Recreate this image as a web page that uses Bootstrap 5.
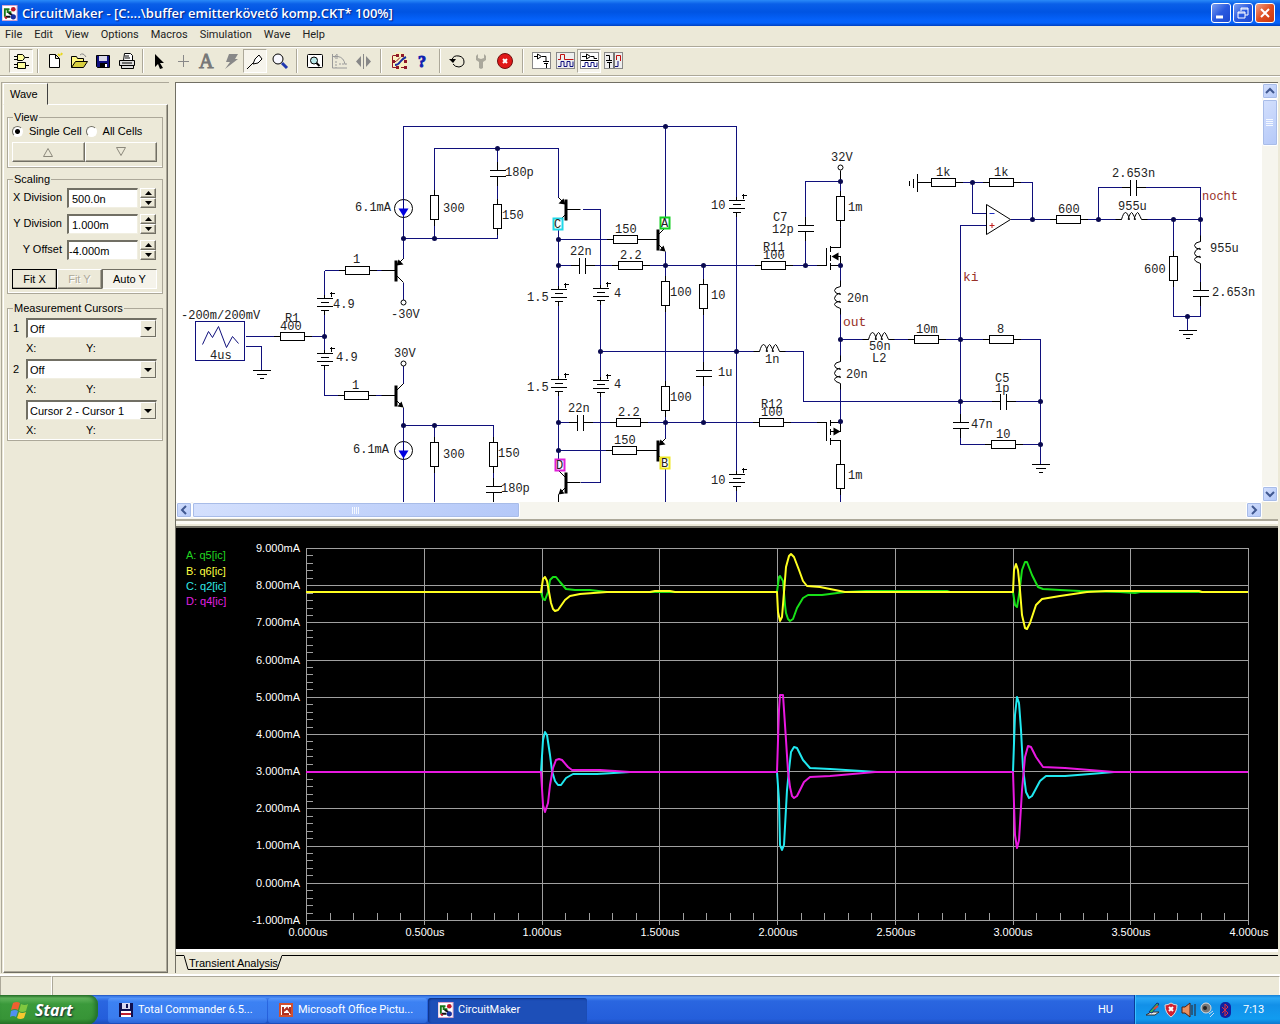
<!DOCTYPE html>
<html lang="en">
<head>
<meta charset="utf-8">
<meta name="viewport" content="width=device-width, initial-scale=1">
<title>CircuitMaker</title>
<link href="https://cdn.jsdelivr.net/npm/bootstrap@5.3.0/dist/css/bootstrap.min.css" rel="stylesheet">
<style>
:root{--face:#ece9d8;--shade:#aca899;--dark:#716f64}
body{background:var(--face);font:11px/14px Roboto,sans-serif;color:#000;overflow-x:hidden}
button,input,select{font:inherit;color:inherit;border-radius:0}
svg{display:block;flex:none}
.titlebar{height:26px;padding:0 5px 0 2px;background:linear-gradient(#2a8af8 0,#0a5fe8 4px,#0054e3 12px,#0562fb 20px,#0462fa 23px,#0040c0 26px)}
.titlebar h1{font:600 13px/26px "Open Sans",sans-serif;color:#fff;margin:0;text-shadow:1px 1px 1px #0a1f80}
.winbtn{width:20px;height:20px;padding:0;border:1px solid #fff;border-radius:3px;background:linear-gradient(135deg,#7d9ff0,#2a5ae0 50%,#1c48d0)}
.winbtn.shut{background:linear-gradient(135deg,#f0a088,#e04d20 50%,#c83810)}
.menubar{height:20px;padding:0 5px;gap:12px}
.menubar a{font:11px/18px Roboto,sans-serif;color:#222;text-decoration:none}
.toolbar{height:30px;padding:2px 9px 0;border-top:1px solid var(--shade);border-bottom:1px solid var(--shade);box-shadow:inset 0 1px #fff,0 1px #fff}
.tool{width:24px;height:24px;padding:2px;border:0;background:none}
.tool.down{padding:1px;border:1px solid;border-color:var(--shade) #fff #fff var(--shade);background:#f6f4ec}
.tsep{width:2px;height:24px;margin:0 4px;border-left:1px solid var(--shade);border-right:1px solid #fff}
.tsep.slim{margin:0 3px}.tsep.wide{margin:0 5px}
.workarea{padding:6px 2px 0 1px}
.side{width:168px;font:11px/12px "Liberation Sans",sans-serif;border-left:1px solid var(--shade);border-top:1px solid var(--shade)}
.sidetab{width:45px;height:22px;padding:4px 0 0 6px;border:1px solid;border-color:#fff #404040 transparent #fff;background:var(--face);margin-left:1px;position:relative;z-index:1}
.sidepage{border:1px solid;border-color:#fff #716f64 #716f64 #fff;box-shadow:inset -1px -1px var(--shade);padding:6px 4px 0 3px;margin:-1px 1px 0}
fieldset{border:1px solid var(--shade);box-shadow:inset 1px -1px #fff;padding:0 5px 5px 4px}
legend{float:none;width:auto;font:11px/12px "Liberation Sans",sans-serif;margin:0 0 0 1px;padding:0 1px}
.radios label{line-height:16px;display:flex;align-items:center;gap:6px}
.radios input{appearance:none;width:11px;height:11px;margin:0;border-radius:50%;background:#fff;border:1px solid;border-color:#716f64 #fff #fff #716f64}
.radios input:checked{background:radial-gradient(#000 2px,#fff 3px)}
.pushbtn{height:20px;padding:0;border:1px solid;border-color:#fff #716f64 #716f64 #fff;background:var(--face);box-shadow:inset -1px -1px var(--shade)}
.pushbtn.default{border-color:#000}
.pushbtn.in{border-color:#716f64 #fff #fff #716f64;background:#f5f3ea;box-shadow:none}
.pushbtn:disabled{color:var(--shade);text-shadow:1px 1px #fff}
.sunk{height:20px;min-width:0;background:#fff;border:2px solid;border-color:var(--dark) #f1efe2 #f1efe2 var(--dark);border-width:2px 1px 1px 2px;border-radius:0;appearance:none;padding:0 3px}
.valrow label{width:50px;text-align:right;line-height:18px}
.valrow input{width:71px;margin-left:5px}
.spin{width:16px;margin-left:2px}
.spin button{height:10px;padding:0}
.cursel select{width:100%;padding:0 2px}
.dropmark{position:absolute;right:1px;top:2px;width:16px;height:17px;pointer-events:none;background:var(--face);border:1px solid;border-color:#fff #716f64 #716f64 #fff}
.xy{padding-left:14px}
.xy span{width:60px;line-height:20px}
.views{border-left:1px solid var(--dark);border-top:1px solid var(--dark);margin-left:6px;min-width:0}
.sheet{background:#fff;min-width:0}
.sheet text{font:12px "Liberation Mono",monospace;fill:#222}
.sheet .net{fill:#983028}
.sheet .big{font-size:13px}
.sbar{background:#f6f5ee}
.vbar{width:16px}.hbar{height:17px}
.sbtn,.thumb{background:linear-gradient(135deg,#d4e0fd,#b4c8f8);border:1px solid #fff;border-radius:2px;padding:0;box-shadow:0 0 0 1px #a8bce8 inset}
.sbtn{width:16px;height:16px;flex:none}
.splitter{height:9px;border-top:2px solid var(--shade);box-shadow:inset 0 3px #fbfaf4;border-bottom:2px solid var(--dark)}
.plot{background:#000}
.plot text{font:11px "Liberation Sans",sans-serif;fill:#fff}
.ptabs{height:24px;border-top:3px solid #fff;position:relative}
.ptabs .edge{flex:1;height:1px;margin-top:3px;background:#000}
.ptabs a{font:11px/14px "Liberation Sans",sans-serif;color:#000;text-decoration:none;width:98px;height:20px;position:relative;padding:4px 0 0 5px;margin-left:8px;white-space:nowrap}
.ptabs a svg{position:absolute;left:0;top:3px}
.lead-edge{position:absolute;left:0;top:3px;width:8px;height:1px;background:#000}
.status{height:21px;border-top:2px solid #fff;margin-top:1px}
.status div{border-top:1px solid var(--shade);border-right:1px solid #fff;border-left:1px solid var(--shade)}
.taskbar{height:30px;background:linear-gradient(#1c50c0 0,#4a8cf4 2px,#2a66e0 6px,#245edb 24px,#1a48b0);font:11px/14px Roboto,sans-serif;color:#fff}
.startbtn{width:98px;border:0;padding:0 0 0 10px;color:#fff;border-radius:0 9px 12px 0;background:linear-gradient(#2a7028 0,#62b45c 3px,#3b9a3b 9px,#379437 24px,#236b23);box-shadow:inset -3px 0 4px #22702a;gap:5px}
.startbtn span{font:italic bold 16px/26px "Open Sans",sans-serif;text-shadow:1px 1px 2px #123}
.taskbtn{width:159px;height:25px;padding:0 10px;border:0;border-radius:3px;color:#fff;background:linear-gradient(#5a98fa,#3c81f3 4px,#3a7cee 20px,#2c66d8);gap:4px}
.taskbtn.cur{background:#1d4fb8;box-shadow:inset 1px 1px 2px #0c2f80}
.tray{width:146px;padding-left:10px;border-left:1px solid #0a3a98;background:linear-gradient(#1480d8 0,#2aa8f6 3px,#1290e8 10px,#119cf0 24px,#0c70c8);box-shadow:inset 1px 0 #3cc0ff;gap:2px}
.tray span{margin-left:8px}
</style>
<script src="https://cdn.jsdelivr.net/npm/bootstrap@5.3.0/dist/js/bootstrap.bundle.min.js"></script>
</head>
<body class="d-flex flex-column min-vh-100">

<svg width="0" height="0" class="position-absolute" aria-hidden="true">
  <defs>
    <g id="appicon"><rect width="16" height="16" fill="#fff" stroke="#d8a0c8"/><path d="M2 4h6M3 4v8M6 4v3h4" stroke="#187818" stroke-width="2" fill="none"/><circle cx="12" cy="4" r="2.5" fill="#c01828"/><path d="M7 8l4 2M4 12h5" stroke="#111" stroke-width="2"/><circle cx="12" cy="12" r="2.8" fill="#1830a0"/><path d="M3 12l2 2" stroke="#c01828" stroke-width="2"/></g>
    <g id="rh"><path d="M-19 0h38" stroke="#000"/><rect x="-12" y="-4" width="24" height="8" fill="#fff" stroke="#000"/></g>
    <g id="rv"><path d="M0 -18v36" stroke="#000"/><rect x="-4" y="-12" width="8" height="24" fill="#fff" stroke="#000"/></g>
    <g id="cv"><path d="M0 -12v24" stroke="#000"/><rect x="-8" y="-3" width="16" height="6" fill="#fff" stroke="none"/><path d="M-8 -3h16M-8 3h16" stroke="#000"/></g>
    <g id="ch"><path d="M-12 0h24" stroke="#000"/><rect x="-3" y="-8" width="6" height="16" fill="#fff" stroke="none"/><path d="M-3 -8v16M3 -8v16" stroke="#000"/></g>
    <g id="bat"><path d="M0 -4v20" stroke="#000"/><rect x="-8" y="0" width="16" height="12" fill="#fff" stroke="none"/><path d="M-8 0h16M-4 4h8M-8 8h16M-4 12h8M5 -5h5M7 -7v5" stroke="#000"/></g>
    <g id="lh"><rect x="-12" y="-2" width="24" height="4" fill="#fff" stroke="none"/><path d="M-18 0h6q2-7 4-7t4 7q-2 1-1-2 2-5 3-5t4 7q-2 1-1-2 2-5 3-5t4 7h6" fill="none" stroke="#000"/></g>
    <g id="lv"><rect x="-2" y="-12" width="4" height="24" fill="#fff" stroke="none"/><path d="M0 -18v6q-6 1-6 4t6 4q0-2-2-1-4 2-4 5t6 4q0-2-2-1-4 1-4 3t6 4v6" fill="none" stroke="#000"/></g>
    <g id="gnd"><path d="M-9 0h18M-5 4h10M-2 8h4" stroke="#000"/></g>
    <circle id="dot" r="2.5" fill="#0a0a50"/>
    <g id="isrc"><circle r="9" fill="#fff" stroke="#000"/><path d="M0 -9v18" stroke="#000080"/><path d="M-5 0h10l-5 8z" fill="#0000e0"/></g>
    <g id="npn"><rect x="-1" y="-10" width="3" height="21" fill="#000"/><path d="M-14 0h14M1 -5l7-7M1 5l7 7" stroke="#000"/><path d="M8 12l-6-1 4-5z" fill="#000"/></g>
    <g id="pnp"><rect x="-1" y="-10" width="3" height="21" fill="#000"/><path d="M-14 0h14M1 -5l7-7M1 5l7 7" stroke="#000"/><path d="M1 -5l7-1-5-5z" fill="#000"/></g>
  </defs>
</svg>

<header class="titlebar d-flex align-items-center">
  <svg width="16" height="17" viewBox="0 0 17 17"><use href="#appicon"/></svg>
  <h1 class="ms-1 flex-grow-1">CircuitMaker - [C:...\buffer emitterkövető komp.CKT* 100%]</h1>
  <div class="d-flex" style="gap:2px">
    <button class="winbtn" aria-label="Minimize"><svg width="18" height="18"><path d="M4 13h7" stroke="#fff" stroke-width="3"/></svg></button>
    <button class="winbtn" aria-label="Restore"><svg width="18" height="18"><path d="M7 7V4h7v7h-3M7 5h7M4 8h7v6H4zM4 9h7" fill="none" stroke="#fff"/></svg></button>
    <button class="winbtn shut" aria-label="Close"><svg width="18" height="18"><path d="M5 5l8 8M13 5l-8 8" stroke="#fff" stroke-width="2"/></svg></button>
  </div>
</header>

<nav class="menubar d-flex">
  <a href="#">File</a><a href="#">Edit</a><a href="#">View</a><a href="#">Options</a><a href="#">Macros</a><a href="#">Simulation</a><a href="#">Wave</a><a href="#">Help</a>
</nav>

<div class="toolbar d-flex" role="toolbar">
  <button class="tool down" aria-label="Parts"><svg width="20" height="20" fill="#ffffa0" stroke="#000"><path d="M6.500 3.500h5q4 3 0 6h-5zM3 5.500h3M3 8.500h3M14 6.500h4M6.500 11.500h8v6h-8zM3 13.500h3M3 16.500h3M15 14.500h3"/></svg></button>
  <span class="tsep"></span>
  <button class="tool" aria-label="New"><svg width="20" height="20"><path d="M4.500 3.500h6l4 4v9h-10zM10.500 3.500v4h4" fill="#fff" stroke="#000"/><path d="M13 3l2 2M16 4l1-2" stroke="#e8d820" stroke-width="2"/></svg></button>
  <button class="tool" aria-label="Open"><svg width="20" height="20"><path d="M2.500 16.500v-11h5l1 2h6v3" fill="#fff880" stroke="#000"/><path d="M2.500 16.500l4-6h12l-4 6z" fill="#d8d040" stroke="#000"/><path d="M11 4q3-3 6 2" fill="none" stroke="#888"/></svg></button>
  <button class="tool" aria-label="Save"><svg width="20" height="20"><path d="M3.500 4.500h13v12h-12l-1-1z" fill="#101080" stroke="#000"/><path d="M6 5h8v5H6z" fill="#d8d8e8"/><path d="M7 12h7v4H7z" fill="#000"/><path d="M12 13h2v3h-2z" fill="#fff"/></svg></button>
  <button class="tool" aria-label="Print"><svg width="20" height="20" stroke="#000"><path d="M6.500 9.500l1-7h6l2 2v5" fill="#fff"/><path d="M2.500 9.500h15v5h-15zM4.500 14.500h12v3h-12z" fill="#ddd"/><path d="M8 5h4M8 7h5M5 12h10"/></svg></button>
  <span class="tsep slim"></span>
  <button class="tool" aria-label="Select"><svg width="20" height="20"><path d="M6 3v13l3-3 2 5 3-1-3-5h4z"/></svg></button>
  <button class="tool" aria-label="Wire"><svg width="20" height="20"><path d="M10.500 4v12M5 10.500h11" stroke="#888"/></svg></button>
  <button class="tool" aria-label="Text"><svg width="20" height="20"><text x="2" y="17" style="font:20px 'Liberation Serif',serif" fill="#777" stroke="#777">A</text></svg></button>
  <button class="tool" aria-label="Delete"><svg width="20" height="20"><path d="M8 3h9l-3 5h3L4 18l5-7H5z" fill="#888"/></svg></button>
  <button class="tool down" aria-label="Probe"><svg width="20" height="20"><path d="M10 8l4-4 3 4-4 4-5 1zM8 12l-6 6" fill="#fff" stroke="#000"/></svg></button>
  <button class="tool" aria-label="Zoom"><svg width="20" height="20"><circle cx="9" cy="8" r="5" fill="#f8f8ff" stroke="#000"/><path d="M13 12l5 5" stroke="#2038b0" stroke-width="3"/></svg></button>
  <span class="tsep wide"></span>
  <button class="tool" aria-label="Fit"><svg width="20" height="20"><rect x="2.500" y="3.500" width="15" height="13" rx="1" fill="#fff" stroke="#000"/><circle cx="9" cy="9.500" r="3.500" fill="#b8e8e8" stroke="#000"/><path d="M11.500 12l3 3" stroke="#000" stroke-width="2"/></svg></button>
  <button class="tool" aria-label="Rotate"><svg width="20" height="20" fill="none" stroke="#999"><path d="M3.500 3v14H18M3 5.500h6q6 1 7 8"/><path d="M8 3v5l-3-2zM7 10v7M10 13h8" stroke-dasharray="2 1"/></svg></button>
  <button class="tool" aria-label="Mirror"><svg width="20" height="20"><path d="M8 5v11l-5-5.500zM13 5v11l5-5.500z" fill="#888"/><path d="M10.500 3v15" stroke="#888"/></svg></button>
  <span class="tsep wide"></span>
  <button class="tool" aria-label="Digital options"><svg width="20" height="20" fill="none"><circle cx="10" cy="10" r="9" fill="#f8f0c0"/><path d="M3.500 4.500v12h4M4 10.500h3l4-4M4 4.500h4M12 16.500h6" stroke="#901828"/><path d="M6 14q3 0 5-3t6-5" stroke="#1830a0" stroke-width="2"/><path d="M7 3h3v3H7zM12 3h3v3h-3zM7 15h3v3H7zM15 9h3v3h-3zM15 15h3v3h-3zM3 9h3v3H3z" fill="#901828"/></svg></button>
  <button class="tool" aria-label="Help"><svg width="20" height="20"><text x="5" y="16" style="font:bold 16px 'Liberation Serif',serif" fill="#1020b0" stroke="#1020b0">?</text></svg></button>
  <span class="tsep"></span>
  <button class="tool" aria-label="Reset"><svg width="20" height="20"><path d="M5 9q1-5 7-4 5 1 5 6 0 4-5 5-4 0-6-3" fill="none" stroke="#000"/><path d="M2 8h7l-3 4z"/></svg></button>
  <button class="tool" aria-label="Step"><svg width="20" height="20"><path d="M7 3v4l3 1 3-1V3l2 2v4l-3 2v6l-2 1-2-1v-6L5 9V5z" fill="#aaa89c"/></svg></button>
  <button class="tool" aria-label="Stop"><svg width="20" height="20"><circle cx="10" cy="10" r="7.500" fill="#e01818" stroke="#701010"/><path d="M8 8l4 4M12 8l-4 4" stroke="#fff" stroke-width="2"/></svg></button>
  <span class="tsep wide"></span>
  <button class="tool" aria-label="Circuit view"><svg width="20" height="20" fill="none"><rect x="1.500" y="1.500" width="18" height="16" fill="#fff" stroke="#888"/><path d="M3 5.500h3M6.500 3v5l4-2.500zM11 5.500h4v5M12 10.500h6M13 12.500h4M15.500 13v4" stroke="#000"/></svg></button>
  <button class="tool" aria-label="Waveform view"><svg width="20" height="20" fill="none"><rect x="1.500" y="1.500" width="18" height="16" fill="#eee" stroke="#888"/><path d="M3 8.500h2.500v-5h4v5h9" stroke="#c01010"/><path d="M3 15.500h3v-5h3v5h3v-5h3v5h3v-5" stroke="#101080"/></svg></button>
  <button class="tool down" aria-label="Split horizontally"><svg width="20" height="20" fill="none"><rect x="1.500" y="1.500" width="18" height="16" fill="#fff" stroke="#888"/><path d="M3 5.500h4M7.500 3v5l4-2.500zM12 5.500h3v2h3M2 9.500h17" stroke="#000"/><path d="M3 15.500h3v-4h3v4h3v-4h3v4h3v-4" stroke="#101080"/></svg></button>
  <button class="tool" aria-label="Split vertically"><svg width="20" height="20" fill="none"><rect x="1.500" y="1.500" width="18" height="16" fill="#eee" stroke="#888"/><path d="M3 4.500h3.500v5M3 9.500h6M4 11.500h5M6.500 12v5M11 2v15" stroke="#000"/><path d="M13.500 9V4.500h4V10" stroke="#c01010"/><path d="M12 15.500h3V10" stroke="#101080"/></svg></button>
</div>

<main class="workarea d-flex flex-grow-1">
  <aside class="side d-flex flex-column flex-shrink-0">
    <div class="sidetab">Wave</div>
    <div class="sidepage flex-grow-1">
      <fieldset>
        <legend>View</legend>
        <div class="radios d-flex" style="gap:4px">
          <label><input type="radio" name="cells" checked>Single Cell</label>
          <label><input type="radio" name="cells">All Cells</label>
        </div>
        <div class="d-flex" style="margin-top:3px">
          <button class="pushbtn w-50" aria-label="Previous cell"><svg width="12" height="10" class="mx-auto"><path d="M1.500 9.500h9l-4.500-8z" fill="none" stroke="#8c897c"/></svg></button>
          <button class="pushbtn w-50" aria-label="Next cell"><svg width="12" height="10" class="mx-auto"><path d="M1.500 .5h9l-4.500 8z" fill="none" stroke="#8c897c"/></svg></button>
        </div>
      </fieldset>
      <fieldset style="margin-top:5px;padding-bottom:4px">
        <legend>Scaling</legend>
        <div class="d-flex flex-column" style="gap:6px;margin-top:3px">
          <div class="valrow d-flex"><label for="xdiv">X Division</label><input id="xdiv" class="sunk" value="500.0n"><span class="spin d-flex flex-column"><button class="pushbtn" aria-label="Up"><svg width="14" height="8"><path d="M4 6h7L7.500 2z"/></svg></button><button class="pushbtn" aria-label="Down"><svg width="14" height="8"><path d="M4 2h7L7.500 6z"/></svg></button></span></div>
          <div class="valrow d-flex"><label for="ydiv">Y Division</label><input id="ydiv" class="sunk" value="1.000m"><span class="spin d-flex flex-column"><button class="pushbtn" aria-label="Up"><svg width="14" height="8"><path d="M4 6h7L7.500 2z"/></svg></button><button class="pushbtn" aria-label="Down"><svg width="14" height="8"><path d="M4 2h7L7.500 6z"/></svg></button></span></div>
          <div class="valrow d-flex"><label for="yoff">Y Offset</label><input id="yoff" class="sunk" style="padding-left:0" value="-4.000m"><span class="spin d-flex flex-column"><button class="pushbtn" aria-label="Up"><svg width="14" height="8"><path d="M4 6h7L7.500 2z"/></svg></button><button class="pushbtn" aria-label="Down"><svg width="14" height="8"><path d="M4 2h7L7.500 6z"/></svg></button></span></div>
        </div>
        <div class="d-flex" style="margin-top:9px"><button class="pushbtn default flex-fill">Fit X</button><button class="pushbtn flex-fill" disabled>Fit Y</button><button class="pushbtn in flex-fill">Auto Y</button></div>
      </fieldset>
      <fieldset style="margin-top:8px;padding-bottom:0">
        <legend>Measurement Cursors</legend>
        <div class="d-flex flex-column" style="gap:1px;margin-top:4px">
          <div><div class="d-flex align-items-center"><label for="c1" style="width:14px;padding-left:1px">1</label><div class="cursel position-relative flex-grow-1"><select id="c1" class="sunk"><option>Off</option></select><span class="dropmark"><svg width="14" height="15"><path d="M3 6h8l-4 4z"/></svg></span></div></div><div class="xy d-flex"><span>X:</span><span>Y:</span></div></div>
          <div><div class="d-flex align-items-center"><label for="c2" style="width:14px;padding-left:1px">2</label><div class="cursel position-relative flex-grow-1"><select id="c2" class="sunk"><option>Off</option></select><span class="dropmark"><svg width="14" height="15"><path d="M3 6h8l-4 4z"/></svg></span></div></div><div class="xy d-flex"><span>X:</span><span>Y:</span></div></div>
          <div><div class="d-flex align-items-center" style="padding-left:14px"><div class="cursel position-relative flex-grow-1"><select aria-label="Difference" class="sunk"><option>Cursor 2 - Cursor 1</option></select><span class="dropmark"><svg width="14" height="15"><path d="M3 6h8l-4 4z"/></svg></span></div></div><div class="xy d-flex"><span>X:</span><span>Y:</span></div></div>
        </div>
      </fieldset>
    </div>
  </aside>

  <section class="views flex-grow-1 d-flex flex-column">
    <div class="d-flex">
      <div class="sheet flex-grow-1 overflow-hidden">
        <svg width="1086" height="419" viewBox="176 83 1086 419" fill="none">
          <g transform="translate(.5 .5)">
          <path shape-rendering="crispEdges" stroke="#10107c" d="M403 258V126H736V502M434 238V148H558V197M497 148V238H403M665 126V216M600 209V482M582 209H600M558 228V458M558 239H650M558 265H816M324 270H381M324 270V395H381M245 336H324M245 346H261V370M403 407V502M403 425H493V502M434 425V502M665 251V438M703 265V422M600 351H803V401H1040M558 422H816M558 450H650M600 482H580M665 468V502M805 265V181H840V247M840 265V422M840 440V502M840 339H1040V464M960 444V225H986M960 444H1040M917 182H1032V219M972 182V213H986M1010 219H1200M1098 219V187H1200V316H1173V219M1187 316V330M403 282V300M403 383V365"/>
          <g shape-rendering="crispEdges" stroke="#000">
            <use href="#rv" x="434" y="207"/><use href="#rv" x="497" y="216"/><use href="#cv" x="497" y="173"/>
            <use href="#rh" x="357" y="270"/><use href="#rh" x="356" y="395"/><use href="#rh" x="292" y="336"/>
            <use href="#bat" x="324" y="298"/><use href="#bat" x="324" y="353"/><use href="#rv" x="434" y="454"/><use href="#rv" x="493" y="454"/><use href="#cv" x="493" y="489"/>
            <use href="#rh" x="625" y="239"/><use href="#rh" x="630" y="265"/><use href="#ch" x="582" y="265"/><use href="#bat" x="558" y="289"/><use href="#bat" x="600" y="288"/><use href="#bat" x="558" y="379"/><use href="#bat" x="600" y="380"/>
            <use href="#rv" x="665" y="293"/><use href="#rv" x="665" y="398"/><use href="#rv" x="703" y="296"/><use href="#cv" x="703" y="373"/><use href="#bat" x="736" y="200"/><use href="#bat" x="736" y="474"/>
            <use href="#ch" x="580" y="422"/><use href="#rh" x="628" y="422"/><use href="#rh" x="624" y="450"/><use href="#rh" x="773" y="265"/><use href="#rh" x="771" y="422"/><use href="#cv" x="805" y="228"/><use href="#rv" x="840" y="208"/><use href="#rv" x="840" y="476"/>
            <use href="#rh" x="926" y="339"/><use href="#rh" x="1001" y="339"/><use href="#ch" x="1003" y="401"/><use href="#cv" x="960" y="425"/><use href="#rh" x="1003" y="444"/><use href="#rh" x="943" y="182"/><use href="#rh" x="1001" y="182"/><use href="#rh" x="1068" y="219"/><use href="#ch" x="1133" y="187"/><use href="#rv" x="1173" y="268"/><use href="#cv" x="1200" y="293"/>
            <use href="#gnd" x="261" y="370"/><use href="#gnd" x="1040" y="464"/><use href="#gnd" x="1187" y="330"/>
            <path d="M917 173v18M913 178v9M909 180v5M917 182h8"/>
            <path d="M816 265h10V247M830 245v6M830 254v6M830 262v7M830 247h10v-20M830 265h10v-9h-8M816 422h10v18M830 419v6M830 428v6M830 437v7M830 422h10v9h-10M830 440h10v18"/>
            <rect x="195" y="321" width="49" height="39" fill="#fff" stroke="#10107c"/>
          </g>
          <use href="#lv" x="840" y="298"/><use href="#lv" x="840" y="373"/><use href="#lh" x="880" y="339"/><use href="#lh" x="771" y="351"/><use href="#lh" x="1133" y="219"/><use href="#lv" x="1200" y="253"/>
          <path d="M202 344l6-13 4 6 6-11 8 21 6-11 6 7" stroke="#10107c"/>
          <use href="#isrc" x="403" y="208"/><use href="#isrc" x="403" y="450"/>
          <use href="#pnp" x="395" y="270"/><use href="#npn" x="395" y="395"/><use href="#npn" x="657" y="239"/><use href="#pnp" x="657" y="450"/>
          <use href="#pnp" transform="translate(566 209) scale(-1 1)"/><use href="#npn" transform="translate(566 482) scale(-1 1)"/>
          <path d="M558 494v8" stroke="#000"/>
          <path d="M831 256l7-4v8zM840 431l-7-4v8z" fill="#000"/>
          <path d="M986 204v30l24-15z" fill="#fff" stroke="#000"/><path d="M989 213h5" stroke="#2030c0"/><path d="M989 225h5M991.500 222.500v5" stroke="#c02020"/>
          <g fill="#fff" stroke="#000"><circle cx="403" cy="302" r="2.500"/><circle cx="403" cy="363" r="2.500"/><circle cx="840" cy="167" r="2.500"/></g>
          <path d="M840 170v11" stroke="#000"/>
          <use href="#dot" x="403" y="238"/><use href="#dot" x="434" y="238"/><use href="#dot" x="497" y="148"/><use href="#dot" x="665" y="126"/><use href="#dot" x="324" y="336"/><use href="#dot" x="403" y="425"/><use href="#dot" x="434" y="425"/><use href="#dot" x="558" y="239"/><use href="#dot" x="558" y="265"/><use href="#dot" x="558" y="422"/><use href="#dot" x="558" y="450"/><use href="#dot" x="600" y="351"/><use href="#dot" x="665" y="265"/><use href="#dot" x="703" y="265"/><use href="#dot" x="665" y="422"/><use href="#dot" x="703" y="422"/><use href="#dot" x="736" y="351"/><use href="#dot" x="805" y="265"/><use href="#dot" x="840" y="181"/><use href="#dot" x="840" y="265"/><use href="#dot" x="840" y="339"/><use href="#dot" x="840" y="421"/><use href="#dot" x="960" y="339"/><use href="#dot" x="960" y="401"/><use href="#dot" x="1040" y="401"/><use href="#dot" x="1040" y="444"/><use href="#dot" x="972" y="182"/><use href="#dot" x="1032" y="219"/><use href="#dot" x="1098" y="219"/><use href="#dot" x="1173" y="219"/><use href="#dot" x="1200" y="219"/><use href="#dot" x="1187" y="316"/>
          <g fill="#fff" stroke-width="2"><rect x="553" y="218" width="9" height="11" stroke="#20d8e8"/><rect x="660" y="217" width="9" height="11" stroke="#10d020"/><rect x="660" y="457" width="9" height="11" stroke="#f0e820"/><rect x="555" y="459" width="9" height="11" stroke="#e020d8"/></g>
          </g>
          <text x="554" y="228">C</text><text x="661" y="227">A</text><text x="661" y="467">B</text><text x="556" y="469">D</text>
          <text x="355" y="211">6.1mA</text><text x="443" y="212">300</text><text x="505" y="176">180p</text><text x="502" y="219">150</text><text x="353" y="263">1</text><text x="333" y="308">4.9</text><text x="336" y="361">4.9</text><text x="391" y="318">-30V</text><text x="394" y="357">30V</text><text x="181" y="319">-200m/200mV</text><text x="285" y="322">R1</text><text x="280" y="330">400</text><text x="210" y="359">4us</text><text x="352" y="389">1</text><text x="353" y="453">6.1mA</text><text x="443" y="458">300</text><text x="498" y="457">150</text><text x="501" y="492">180p</text>
          <text x="615" y="233">150</text><text x="570" y="255">22n</text><text x="620" y="259">2.2</text><text x="527" y="301">1.5</text><text x="614" y="297">4</text><text x="527" y="391">1.5</text><text x="614" y="388">4</text><text x="670" y="296">100</text><text x="670" y="401">100</text><text x="711" y="299">10</text><text x="718" y="376">1u</text><text x="568" y="412">22n</text><text x="618" y="416">2.2</text><text x="614" y="444">150</text><text x="711" y="209">10</text><text x="711" y="484">10</text>
          <text x="831" y="161">32V</text><text x="848" y="211">1m</text><text x="773" y="221">C7</text><text x="772" y="233">12p</text><text x="763" y="251">R11</text><text x="763" y="259">100</text><text x="847" y="302">20n</text><text x="869" y="350">50n</text><text x="872" y="362">L2</text><text x="916" y="333">10m</text><text x="846" y="378">20n</text><text x="765" y="363">1n</text><text x="761" y="408">R12</text><text x="761" y="416">100</text><text x="848" y="479">1m</text>
          <text x="936" y="176">1k</text><text x="994" y="176">1k</text><text x="1112" y="177">2.653n</text><text x="1058" y="213">600</text><text x="1118" y="210">955u</text><text x="1144" y="273">600</text><text x="1210" y="252">955u</text><text x="1212" y="296">2.653n</text><text x="997" y="333">8</text><text x="995" y="382">C5</text><text x="995" y="392">1p</text><text x="971" y="428">47n</text><text x="996" y="438">10</text>
          <text class="net" x="1202" y="200">nocht</text><text class="net big" x="963" y="281">ki</text><text class="net big" x="843" y="326">out</text>
        </svg>
      </div>
      <div class="sbar vbar d-flex flex-column flex-shrink-0">
        <button class="sbtn" aria-label="Scroll up"><svg width="14" height="14"><path d="M3 9l4-4 4 4" fill="none" stroke="#405890" stroke-width="2"/></svg></button>
        <div class="thumb d-flex align-items-center justify-content-center" style="height:47px"><svg width="8" height="8"><path d="M0 .5h7M0 2.500h7M0 4.500h7M0 6.500h7" stroke="#f4f8ff"/></svg></div>
        <button class="sbtn mt-auto" aria-label="Scroll down"><svg width="14" height="14"><path d="M3 5l4 4 4-4" fill="none" stroke="#405890" stroke-width="2"/></svg></button>
      </div>
    </div>
    <div class="d-flex">
      <div class="sbar hbar d-flex flex-grow-1">
        <button class="sbtn" aria-label="Scroll left"><svg width="14" height="14"><path d="M9 3L5 7l4 4" fill="none" stroke="#405890" stroke-width="2"/></svg></button>
        <div class="thumb d-flex align-items-center justify-content-center" style="width:328px;height:16px"><svg width="9" height="7"><path d="M.5 0v7M2.500 0v7M4.500 0v7M6.500 0v7" stroke="#f4f8ff"/></svg></div>
        <button class="sbtn ms-auto" aria-label="Scroll right"><svg width="14" height="14"><path d="M5 3l4 4-4 4" fill="none" stroke="#405890" stroke-width="2"/></svg></button>
      </div>
      <div class="vbar"></div>
    </div>
    <div class="splitter"></div>
    <div class="plot">
      <svg class="w-100" viewBox="176 528 1102 421" fill="none">
        <path id="grid" stroke="#a0a0a0" shape-rendering="crispEdges"/>
        <g stroke-width="2" stroke-linejoin="round">
          <path stroke="#18e018" d="M306 592H541L543 599 545 600 548 592 550 580 553 577 556 577 560 582 566 589 575 590 590 590 607 592H777L779 577 780 576 783 581 785 605 786 613 788 619 790 621 793 619 797 608 803 598 808 595 822 595 845 592 866 591H947L950 592H1013L1015 605 1017 607 1019 595 1022 570 1025 562 1027 562 1032 575 1038 587 1043 589 1060 590 1080 591 1120 592 1135 593 1140 592H1248"/>
          <path stroke="#ffff20" d="M306 592H541L543 579 545 577 547 581 549 592 551 603 553 609 555 611 558 610 565 600 570 596 580 594 607 592H650L655 591H670L675 592H777L778 612 780 621 782 617 784 592 786 567 789 556 791 554 794 557 799 570 803 581 807 586 820 587 845 592H1013L1014 570 1016 564 1018 570 1020 590 1022 615 1025 628 1027 629 1030 623 1036 605 1042 599 1060 596 1087 592 1106 591H1199L1202 592H1248"/>
          <path stroke="#20e8f0" d="M306 772H541L543 740 545 732 547 735 550 755 552 771 555 781 558 785 561 785 566 778 573 774 597 774 630 772H777L779 800 780 845 782 850 784 845 787 790 789 770 791 752 794 747 797 748 803 760 810 768 830 769 877 772H1013L1015 715 1017 697 1019 703 1021 730 1023 768 1026 792 1029 798 1032 796 1040 781 1046 776 1065 776 1090 774 1114 772H1248"/>
          <path stroke="#e818e0" d="M306 772H541L543 805 545 812 548 803 550 785 553 768 556 760 559 759 562 760 568 767 572 770 600 770 630 772H777L779 710 780 695 783 695 786 740 788 771 790 787 792 796 794 798 797 796 804 782 810 777 830 776 875 772H1013L1015 835 1017 848 1019 840 1022 790 1025 757 1028 746 1031 747 1036 757 1043 767 1065 768 1114 772H1248"/>
        </g>
        <text x="186" y="559" style="fill:#20d820">A: q5[ic]</text><text x="186" y="575" style="fill:#ffff40">B: q6[ic]</text><text x="186" y="590" style="fill:#30e8e8">C: q2[ic]</text><text x="186" y="605" style="fill:#e020e0">D: q4[ic]</text>
        <g text-anchor="end"><text x="300" y="552">9.000mA</text><text x="300" y="589">8.000mA</text><text x="300" y="626">7.000mA</text><text x="300" y="664">6.000mA</text><text x="300" y="701">5.000mA</text><text x="300" y="738">4.000mA</text><text x="300" y="775">3.000mA</text><text x="300" y="812">2.000mA</text><text x="300" y="849">1.000mA</text><text x="300" y="887">0.000mA</text><text x="300" y="924">-1.000mA</text></g>
        <g text-anchor="middle"><text x="308" y="936">0.000us</text><text x="425" y="936">0.500us</text><text x="542" y="936">1.000us</text><text x="660" y="936">1.500us</text><text x="778" y="936">2.000us</text><text x="896" y="936">2.500us</text><text x="1013" y="936">3.000us</text><text x="1131" y="936">3.500us</text><text x="1249" y="936">4.000us</text></g>
      </svg>
    </div>
    <div class="ptabs d-flex"><span class="lead-edge"></span>
      <a href="#"><svg width="98" height="16"><path d="M0 .5l4 14h89l5-14" fill="none" stroke="#000"/></svg>Transient Analysis</a><span class="edge"></span>
    </div>
  </section>
</main>

<div class="status d-flex"><div style="width:52px"></div><div class="flex-grow-1"></div></div>

<footer class="taskbar d-flex">
  <button class="startbtn d-flex align-items-center"><svg width="20" height="20"><path d="M3 3q4-2 7 0L8 10q-3-2-7 0z" fill="#f06030"/><path d="M11 4q4 2 7 0l-2 7q-4 2-7 0z" fill="#80c840"/><path d="M1 11q4-2 7 0l-2 6q-3-2-6 0z" fill="#5090f0"/><path d="M9 12q3 2 7 0l-2 6q-4 2-7 0z" fill="#f8c830"/></svg><span>Start</span></button>
  <div class="d-flex align-items-center flex-grow-1" style="gap:1px;padding-left:10px">
    <button class="taskbtn d-flex align-items-center"><svg width="16" height="16"><path d="M1 1h14v14H1z" fill="#101050"/><path d="M4 1h8v6H4z" fill="#d8d8f0"/><path d="M8 2h2v4H8z" fill="#101050"/><path d="M3 9h10v6H3z" fill="#fff"/><path d="M3 11h10v2H3z" fill="#c02030"/></svg>Total Commander 6.5...</button>
    <button class="taskbtn d-flex align-items-center"><svg width="16" height="16"><rect x="1" y="1" width="14" height="14" fill="#d05030"/><rect x="3" y="3" width="10" height="10" fill="#fff"/><path d="M5 5v7h6M6 9l3-3 3 4V5" stroke="#b03020" stroke-width="2" fill="none"/></svg>Microsoft Office Pictu...</button>
    <button class="taskbtn cur d-flex align-items-center"><svg width="16" height="17" viewBox="0 0 17 17"><use href="#appicon"/></svg>CircuitMaker</button>
    <span class="ms-auto" style="margin-right:21px">HU</span>
  </div>
  <div class="tray d-flex align-items-center">
    <svg width="16" height="16"><path d="M1 13h9l4-3H6z" fill="#eee" stroke="#333"/><path d="M4 10l8-9 2 1-7 9z" fill="#38b050" stroke="#103080"/><path d="M9 7l4-3" stroke="#e04040" stroke-width="2"/></svg>
    <svg width="16" height="16"><path d="M8 1q3 2 6 2 0 8-6 12Q2 11 2 3q3 0 6-2z" fill="#d02030" stroke="#ddd"/><path d="M6 5l4 4M10 5L6 9" stroke="#fff" stroke-width="2"/></svg>
    <svg width="16" height="16"><path d="M1 5h3l5-4v14l-5-4H1z" fill="#e89060" stroke="#502010"/><path d="M11 3v10M14 2v12" stroke="#302020"/></svg>
    <svg width="16" height="16"><circle cx="7" cy="6" r="5" fill="#777" stroke="#ddd"/><circle cx="6" cy="6" r="2" fill="#222"/><path d="M10 12l4-3M11 15l4-4" stroke="#cde"/></svg>
    <svg width="16" height="16"><rect x="3" y="0" width="11" height="16" rx="5" fill="#1020a0"/><path d="M5 5l6 6-3 3V2l3 3-6 6" fill="none" stroke="#e03040"/></svg>
    <span>7:13</span>
  </div>
</footer>

<script>
// Grid lines and minor ticks: 10 rows by 8 columns, five steps in each division.
const left = 306, right = 1248, top0 = 548, bottom = 920;
let d = "";
for (let i = 0; i <= 50; i++) {
  const y = Math.round(top0 + (bottom - top0) * i / 50) + .5;
  d += `M${left} ${y}H${i % 5 ? left + 7 : right + 1}`;
}
for (let i = 0; i <= 40; i++) {
  const x = Math.round(left + (right - left) * i / 40) + .5;
  d += i % 5 ? `M${x} ${bottom - 7}V${bottom}` : `M${x} ${top0}V${bottom + 5}`;
}
document.getElementById("grid").setAttribute("d", d);
</script>
</body>
</html>
